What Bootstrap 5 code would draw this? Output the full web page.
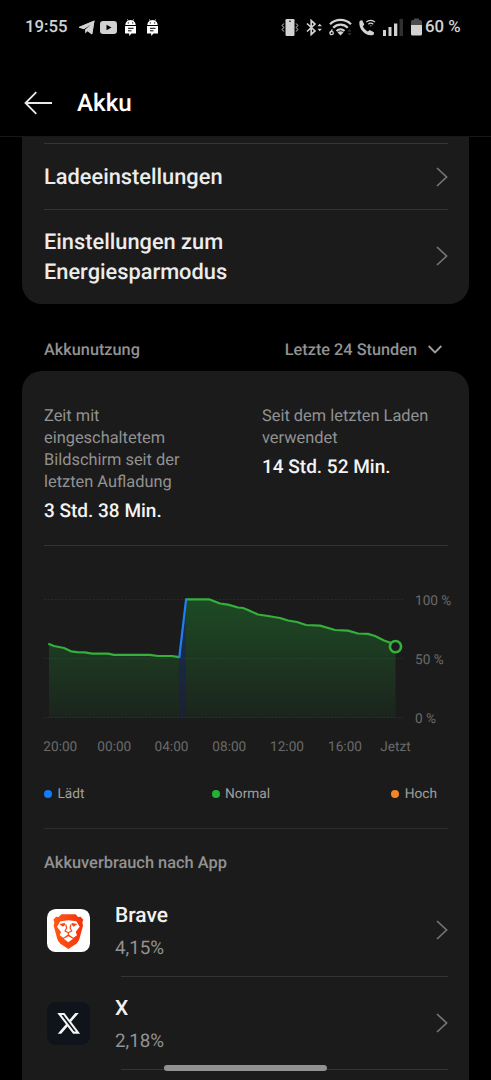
<!DOCTYPE html>
<html lang="de" data-bs-theme="dark">
<head>
<meta charset="utf-8">
<meta name="viewport" content="width=device-width, initial-scale=1">
<title>Akku</title>
<link href="https://cdn.jsdelivr.net/npm/bootstrap@5.3.0/dist/css/bootstrap.min.css" rel="stylesheet">
<style>
  body { background:#000; color:#ececec; font-family:Roboto,"Liberation Sans",sans-serif; height:1080px; overflow:hidden; text-rendering:geometricPrecision; }
  svg { display:block; flex:none; }
  .statusbar { height:54px; padding-left:25px; color:#d2d2d2; font-size:16.8px; font-weight:500; line-height:20px; }
  .statusbar svg { fill:currentColor; }
  .topbar { height:83px; padding:15px 0 0 24px; border-bottom:1px solid #171717; }
  .topbar h1 { font-size:24.2px; font-weight:500; line-height:30px; margin-left:24px; padding-top:1px; }
  .panel { background:#1b1b1b; margin:0 22px; padding:0 21px 0 22px; }
  .panel-top { height:167px; padding-top:6px; border-radius:0 0 20px 20px; }
  .panel-usage { height:709px; padding-top:35px; border-radius:20px 20px 0 0; }
  .rule { height:1px; background:#343434; flex:none; }
  .setting { font-size:21.8px; font-weight:500; line-height:30.5px; }
  .setting span { padding-top:4px; }
  .chev { fill:none; stroke:#757575; stroke-width:1.7; }
  .section-title { height:67px; padding:25px 28px 0 44px; color:#929292; font-size:16.3px; font-weight:500; }
  .stat-label { color:#929292; font-size:16.4px; line-height:22px; }
  .stat-value { color:#f4f4f4; font-size:19px; font-weight:500; line-height:26px; margin-top:4px; }
  .axis { fill:#6a6a6a; font-size:13.6px; }
  .legend-row { height:20px; margin-top:11px; font-size:13.7px; line-height:20px; color:#a0a0a0; padding-right:11px; }
  .dot { width:8px; height:8px; border-radius:50%; margin-right:5.5px; }
  .by-app { color:#929292; font-size:16.4px; font-weight:500; line-height:20px; margin-top:25px; }
  .app-row { height:92px; padding-left:3px; }
  .app-name { font-size:21px; font-weight:500; line-height:32px; color:#f1f1f1; }
  .app-share { font-size:18.8px; line-height:32px; color:#929292; }
  .app-text { margin-left:25px; padding-top:3px; }
  .home { left:164px; top:1065px; width:163px; height:6px; border-radius:3px; background:#919191; }
</style>
</head>
<body class="position-relative">
<svg width="0" height="0" class="position-absolute">
  <symbol id="droid" viewBox="0 0 11 17"><path d="M.3 6C.5 3.700 1.500 2.400 2.800 1.700L2 .5l.5-.3.9 1.200a6 6 0 0 1 4.200 0L8.500.2 9 .5l-.8 1.200c1.300.7 2.300 2 2.500 4.300z"/><path d="M0 7h11v7.500H6.500L4.200 17v-2.500H0z"/><path d="M3 9.300h5.500M3 11.800h3.500" stroke="#000" stroke-width="1"/><circle cx="3.300" cy="3.900" r=".6" fill="#000"/><circle cx="7.700" cy="3.900" r=".6" fill="#000"/></symbol>
  <symbol id="next" viewBox="0 0 12 20"><path d="M1 1l9.600 9L1 19"/></symbol>
</svg>

<div class="statusbar d-flex align-items-center">
  <span style="width:54px">19:55</span>
  <svg width="16" height="15" viewBox="0 0 16 15"><path d="M15.500.5L13 14.200 8.700 11 6.300 13.600 6 9.800 12.300 4 4.500 8.800 0 7.300z"/><path d="M15.500.5L0 6.800v1l5 1.500 7-4.800-5.200 5.500 5.700 4.200q.8.300 1-.6z"/></svg>
  <svg style="margin-left:5px" width="17" height="13" viewBox="0 0 17 13"><rect width="17" height="13" rx="3.200"/><path d="M6.500 3.700v5.600l5-2.800z" fill="#000"/></svg>
  <svg style="margin-left:8px;color:#fff" width="11" height="17"><use href="#droid"/></svg>
  <svg style="margin-left:11px;color:#fff" width="11" height="17"><use href="#droid"/></svg>
  <svg style="margin-left:123px" width="18" height="17" viewBox="0 0 18 17"><rect x="4.500" width="9" height="17" rx="1.200"/><circle cx="9" cy="2.300" r=".8" fill="#000"/><path d="M2.800 4.500l-1.600 2 1.600 2-1.600 2 1.600 2M15.200 4.500l1.600 2-1.600 2 1.600 2-1.600 2" fill="none" stroke="currentColor"/></svg>
  <svg style="margin-left:7px" width="17" height="17" viewBox="0 0 17 17"><path d="M1 4.500l8 7.500-3.800 3.500v-14L9 5l-8 7.500" fill="none" stroke="currentColor" stroke-width="1.700"/><path d="M11.500 7.200L13.700 4.700l2.200 2.500zM11.500 9.800l2.200 2.500 2.200-2.500z"/></svg>
  <svg style="margin-left:6px" width="24" height="18" viewBox="0 0 24 18"><g fill="none" stroke="currentColor" stroke-width="2.200"><path d="M1 6.200a15 15 0 0 1 21 0M4.200 9.700a10.300 10.300 0 0 1 14.600 0M7.500 13a5.800 5.800 0 0 1 8 0"/></g><path d="M8.500 14.500a4.200 4.200 0 0 1 6 0l-3 3z"/><circle cx="2.600" cy="15" r="1.700" fill="none" stroke="currentColor" stroke-width="1.300"/><path d="M1 15L3.300 11.300" stroke="currentColor" stroke-width="1.300"/><path d="M18.500 13.500l2-2.500 2 2.500zM18.500 15l2 2.500 2-2.500z" fill="#333"/></svg>
  <svg style="margin-left:6px" width="17" height="17" viewBox="0 0 17 17"><path d="M.5 2.500Q1 1.300 3.200 1.200L5.300 5.500 3.900 7.200c1 2.300 2.700 4.100 4.900 5.200L10.700 11l4.300 2.300-.3 2.400C7.500 18.800-1 10 .5 2.500z"/><path d="M7.300 3.200a6 6 0 0 1 8.700 0M9.300 5.300a3.500 3.500 0 0 1 4.900 0" fill="none" stroke="currentColor" stroke-width="1.200"/><path d="M10.700 6.400h2.200l-1.100 1.200z"/></svg>
  <svg style="margin-left:6px" width="22" height="17" viewBox="0 0 22 17"><rect x="1" y="11" width="3" height="6"/><rect x="6.500" y="8" width="3" height="9"/><rect x="12" y="4.500" width="3.300" height="12.500"/><rect x="17.500" width="3.500" height="17" fill="#303030"/></svg>
  <svg style="margin-left:6px" width="13" height="18" viewBox="0 0 13 18"><path d="M1 3.500A1.500 1.500 0 0 1 2.500 2H4V.5h5V2h1.500A1.500 1.500 0 0 1 12 3.500V7H1z" fill="#4c4c4c"/><path d="M1 7h11v9a1.500 1.500 0 0 1-1.500 1.500h-8A1.500 1.500 0 0 1 1 16z"/></svg>
  <span style="margin-left:2px">60 %</span>
</div>

<header class="topbar d-flex align-items-center">
  <svg width="29" height="24" viewBox="0 0 29 24" fill="none" stroke="#e9e9e9" stroke-width="1.800"><path d="M28 12H1.500M12.300 1.200L1.500 12l10.800 10.800"/></svg>
  <h1 class="mb-0">Akku</h1>
</header>

<section class="panel panel-top">
  <div class="rule"></div>
  <div class="setting d-flex align-items-center justify-content-between" style="height:65px"><span>Ladeeinstellungen</span><svg class="chev" width="12" height="20"><use href="#next"/></svg></div>
  <div class="rule"></div>
  <div class="setting d-flex align-items-center justify-content-between" style="height:92px"><span>Einstellungen zum<br>Energiesparmodus</span><svg class="chev" width="12" height="20"><use href="#next"/></svg></div>
</section>

<div class="section-title d-flex align-items-center justify-content-between">
  <span>Akkunutzung</span>
  <span class="d-flex align-items-center"><span>Letzte 24 Stunden</span><svg style="margin:-2px 21px 0 11px" width="14" height="9" viewBox="0 0 14 9" fill="none" stroke="#a0a0a0" stroke-width="1.800"><path d="M.7 1L7 7.500 13.300 1"/></svg></span>
</div>

<section class="panel panel-usage">
  <div class="d-flex" style="height:139px">
    <div style="width:218px">
      <div class="stat-label">Zeit mit<br>eingeschaltetem<br>Bildschirm seit der<br>letzten Aufladung</div>
      <div class="stat-value">3 Std. 38 Min.</div>
    </div>
    <div>
      <div class="stat-label">Seit dem letzten Laden<br>verwendet</div>
      <div class="stat-value">14 Std. 52 Min.</div>
    </div>
  </div>
  <div class="rule"></div>
  <!-- Battery level over the last 24 hours -->
  <svg class="overflow-visible" width="404" height="227" viewBox="44 546 404 227">
    <defs>
      <linearGradient id="level" gradientUnits="userSpaceOnUse" x1="0" y1="599" x2="0" y2="718"><stop offset="0" stop-color="#23b43a" stop-opacity=".31"/><stop offset="1" stop-color="#23b43a" stop-opacity=".06"/></linearGradient>
      <linearGradient id="load" gradientUnits="userSpaceOnUse" x1="0" y1="599" x2="0" y2="718"><stop offset="0" stop-color="#1677f5" stop-opacity=".28"/><stop offset="1" stop-color="#1c50ff" stop-opacity=".1"/></linearGradient>
    </defs>
    <path d="M44 599.500H403M44 658.500H403M44 717.500H403" stroke="#292929" stroke-dasharray="2 1.500"/>
    <path fill="url(#level)" d="M49 644L54 646 64 648 71 651.300 77 652.200 85 652.400 92 653.600H108L114 654.800H150L158 656H172L179 657V718H49zM186 599.300H209L220 603.500 228 604.600 238 607.500 243 608 248 610 258 614.500 268 616 280 618 288 620.500 297 622 306 625 320 625.600 335 630 348 630.600 358 633.500 368 633.900 375 636 384 640.500 395.500 645V718H186z"/>
    <path fill="url(#load)" d="M179 657L186 599V718H179z"/>
    <g fill="none" stroke-width="2.200" stroke-linejoin="round">
      <path stroke="#35b03c" d="M48.300 643.700L54 646 64 648 71 651.300 77 652.200 85 652.400 92 653.600H108L114 654.800H150L158 656H172L179 657.200M186 599.300H209L220 603.500 228 604.600 238 607.500 243 608 248 610 258 614.500 268 616 280 618 288 620.500 297 622 306 625 320 625.600 335 630 348 630.600 358 633.500 368 633.900 375 636 384 640.500 391 643"/>
      <path stroke="#1f7ff0" d="M179.200 658L186.200 598.500"/>
    </g>
    <circle cx="395.500" cy="646.600" r="5.600" fill="#1b1b1b" stroke="#35b03c" stroke-width="2.600"/>
    <g class="axis">
      <text x="415" y="604.800">100 %</text><text x="415" y="664">50 %</text><text x="415" y="723.300">0 %</text>
      <g text-anchor="middle"><text x="60.300" y="751">20:00</text><text x="114.300" y="751">00:00</text><text x="171.500" y="751">04:00</text><text x="229.300" y="751">08:00</text><text x="287" y="751">12:00</text><text x="345" y="751">16:00</text><text x="395.500" y="751">Jetzt</text></g>
    </g>
  </svg>
  <div class="legend-row d-flex justify-content-between">
    <span class="d-flex align-items-center"><i class="dot" style="background:#137cf8"></i>Lädt</span>
    <span class="d-flex align-items-center" style="margin-left:6px"><i class="dot" style="background:#25b137"></i>Normal</span>
    <span class="d-flex align-items-center"><i class="dot" style="background:#f58426"></i>Hoch</span>
  </div>
  <div class="rule" style="margin-top:24px;background:#2e2e2e"></div>
  <div class="by-app">Akkuverbrauch nach App</div>
  <div class="app-row d-flex align-items-center" style="margin-top:10px">
    <svg width="43" height="43" viewBox="0 0 129 129">
      <defs><linearGradient id="mane"><stop stop-color="#ff5a16"/><stop offset="1" stop-color="#f5300c"/></linearGradient></defs>
      <rect width="129" height="129" rx="26" fill="#fff"/>
      <path fill="url(#mane)" d="M43 16H86L93 24 101 23 109 32 106 40 108 50 97 91Q95 98 88 104L64 120 40 104Q33 98 31 91L20 50 22 40 19 32 27 23 35 24z"/>
      <path fill="#fff" d="M40 37L64 34 88 37 98 53 86 69 90 79 79 86 64 76 49 86 38 79 42 69 30 53z"/>
      <path fill="#fff" d="M64 82L78 89 64 100 50 89z"/>
      <path d="M37 45L54 42V47L48 53zM91 45L74 42V47L80 53z" fill="#f5450f"/>
      <path d="M56 46L59 57 54 66 64 71 74 66 69 57 72 46M64 71V79" fill="none" stroke="#f5450f" stroke-width="3.500"/>
    </svg>
    <div class="app-text flex-fill"><div class="app-name">Brave</div><div class="app-share">4,15%</div></div>
    <svg class="chev" width="12" height="20"><use href="#next"/></svg>
  </div>
  <div class="rule" style="margin-left:77px"></div>
  <div class="app-row d-flex align-items-center">
    <svg width="43" height="43" viewBox="0 0 43 43"><rect width="43" height="43" rx="8.500" fill="#0f141b"/><path transform="translate(10.300 10) scale(.95)" fill="#f5f5f5" d="M18.901 1.153h3.680l-8.040 9.190L24 22.846h-7.406l-5.800-7.584-6.638 7.584H.474l8.600-9.830L0 1.154h7.594l5.243 6.932ZM17.610 20.644h2.039L6.486 3.240H4.298Z"/></svg>
    <div class="app-text flex-fill"><div class="app-name">X</div><div class="app-share">2,18%</div></div>
    <svg class="chev" width="12" height="20"><use href="#next"/></svg>
  </div>
  <div class="rule" style="margin-left:77px"></div>
</section>
<div class="home position-absolute"></div>
<script src="https://cdn.jsdelivr.net/npm/bootstrap@5.3.0/dist/js/bootstrap.bundle.min.js"></script>
</body>
</html>
